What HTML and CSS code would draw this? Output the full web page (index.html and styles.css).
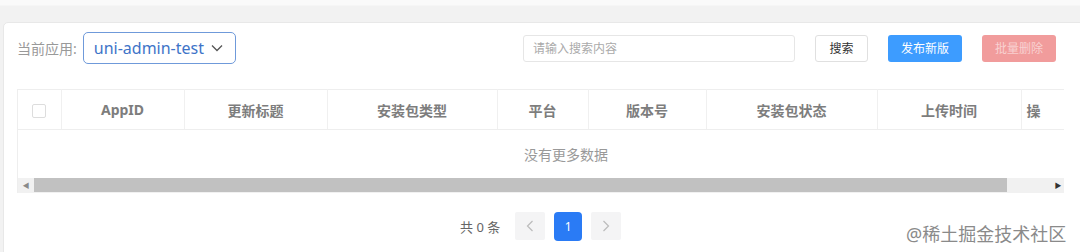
FILE: index.html
```html
<!DOCTYPE html>
<html lang="zh-CN">
<head>
    <meta charset="UTF-8">
    <title>升级中心</title>
    <link rel="stylesheet" href="styles.css">
</head>
<body>
    <div class="page">
        <div class="card">
            <div class="toolbar">
                <div class="app-picker">
                    <span class="picker-label">当前应用:</span>
                    <div class="select">
                        <span>uni-admin-test</span>
                        <svg width="12" height="8" viewBox="0 0 12 8"><path d="M1 1.5 L6 6.5 L11 1.5" fill="none" stroke="#555" stroke-width="1.3"/></svg>
                    </div>
                </div>
                <div class="actions">
                    <input class="search" type="text" placeholder="请输入搜索内容">
                    <button class="btn">搜索</button>
                    <button class="btn btn-primary">发布新版</button>
                    <button class="btn btn-danger" disabled>批量删除</button>
                </div>
            </div>

            <div class="table-wrap">
                <table>
                    <thead>
                        <tr>
                            <th class="col-check"><span class="checkbox"></span></th>
                            <th style="width: 123px">AppID</th>
                            <th style="width: 143px">更新标题</th>
                            <th style="width: 170px">安装包类型</th>
                            <th style="width: 91px">平台</th>
                            <th style="width: 118px">版本号</th>
                            <th style="width: 171px">安装包状态</th>
                            <th style="width: 144px">上传时间</th>
                            <th class="col-op">操</th>
                        </tr>
                    </thead>
                    <tbody>
                        <tr>
                            <td colspan="9" class="empty">没有更多数据</td>
                        </tr>
                    </tbody>
                </table>
                <div class="scrollbar">
                    <span class="arrow">&#9664;</span>
                    <div class="thumb"></div>
                    <span class="arrow">&#9654;</span>
                </div>
            </div>

            <div class="pager">
                <span class="total">共 0 条</span>
                <span class="page-btn">
                    <svg width="8" height="12" viewBox="0 0 8 12"><path d="M6.5 1 L1.5 6 L6.5 11" fill="none" stroke="#bbb" stroke-width="1.2"/></svg>
                </span>
                <span class="page-btn current">1</span>
                <span class="page-btn">
                    <svg width="8" height="12" viewBox="0 0 8 12"><path d="M1.5 1 L6.5 6 L1.5 11" fill="none" stroke="#bbb" stroke-width="1.2"/></svg>
                </span>
            </div>
        </div>
        <div class="watermark">@稀土掘金技术社区</div>
    </div>
</body>
</html>
```

FILE: styles.css
```css
* {
    margin: 0;
    padding: 0;
    box-sizing: border-box;
}

body {
    background: #f3f3f3;
    font-family: "Noto Sans", "Noto Sans CJK SC", sans-serif;
    width: 1080px;
    height: 252px;
    overflow: hidden;
}

.page {
    position: relative;
    height: 252px;
    padding: 22px 0 0 3px;
    overflow: hidden;
    background: linear-gradient(#fafafa 0, #fafafa 5px, #f2f2f2 6px);
}

.card {
    width: 1100px;
    height: 260px;
    background: #fff;
    border: 1px solid #e8e8e8;
    border-radius: 5px;
    padding: 9px 0 0 13px;
}

.toolbar {
    display: flex;
    justify-content: space-between;
    align-items: center;
    width: 1039px;
    height: 32px;
}

.app-picker {
    display: flex;
    align-items: center;
}

.picker-label {
    font-size: 14px;
    color: #999;
    margin-right: 6px;
    white-space: nowrap;
}

.select {
    display: flex;
    align-items: center;
    justify-content: space-between;
    width: 153px;
    height: 32px;
    padding: 0 12px 0 10px;
    border: 1px solid #6f9ada;
    border-radius: 5px;
    color: #3e74c8;
    font-size: 16px;
    white-space: nowrap;
}

.actions {
    display: flex;
    align-items: center;
    gap: 20px;
}

.search {
    width: 272px;
    height: 27px;
    border: 1px solid #e6e6e6;
    border-radius: 3px;
    padding: 0 9px;
    font-family: inherit;
    font-size: 12px;
    outline: none;
}

.search::placeholder {
    color: #aaa;
}

.btn {
    height: 27px;
    width: 53px;
    border: 1px solid #e0e0e0;
    border-radius: 3px;
    background: #fff;
    color: #333;
    font-family: inherit;
    font-size: 12px;
    white-space: nowrap;
}

.btn-primary,
.btn-danger {
    width: 74px;
    border: none;
    color: #fff;
}

.btn-primary {
    background: #3d9cff;
}

.btn-danger {
    background: #f19c9c;
    color: rgba(255, 255, 255, 0.55);
}

.table-wrap {
    width: 1047px;
    margin-top: 25px;
    border-left: 1px solid #eee;
    overflow: hidden;
}

table {
    width: 1163px;
    border-collapse: collapse;
    table-layout: fixed;
}

th {
    height: 40px;
    border-top: 1px solid #eee;
    border-bottom: 1px solid #eee;
    border-right: 1px solid #f0f0f0;
    font-size: 14px;
    font-weight: 700;
    color: #7d7d7d;
    text-align: center;
    white-space: nowrap;
}

.col-check {
    width: 43px;
}

.col-op {
    width: 160px;
    text-align: left;
    padding-left: 5px;
}

.checkbox {
    display: inline-block;
    width: 14px;
    height: 14px;
    border: 1px solid #ddd;
    border-radius: 2px;
    vertical-align: middle;
}

.empty {
    height: 48px;
    font-size: 14px;
    color: #999;
    text-align: left;
    padding-left: 506px;
}

.scrollbar {
    display: flex;
    align-items: center;
    height: 15px;
    background: #f1f1f1;
}

.arrow {
    width: 16px;
    font-size: 7px;
    color: #8a8a8a;
    text-align: center;
}

.thumb {
    width: 973px;
    height: 14px;
    background: #c1c1c1;
    margin-right: auto;
}

.scrollbar .arrow:last-child {
    width: 12px;
    color: #333;
}

.pager {
    display: flex;
    align-items: center;
    width: 1047px;
    padding-left: 443px;
    margin-top: 19px;
    height: 29px;
}

.total {
    font-size: 13px;
    color: #666;
    margin-right: 15px;
}

.page-btn {
    display: flex;
    align-items: center;
    justify-content: center;
    width: 30px;
    height: 28px;
    background: #f4f4f5;
    border-radius: 2px;
    margin-right: 9px;
}

.page-btn.current {
    width: 28px;
    height: 29px;
    background: #2a7bf5;
    color: #fff;
    font-size: 12px;
    border-radius: 4px;
}

.watermark {
    position: absolute;
    left: 906px;
    top: 220px;
    font-size: 18px;
    color: #8a8a8a;
    text-shadow: 0 0 2px #fff;
}
```
